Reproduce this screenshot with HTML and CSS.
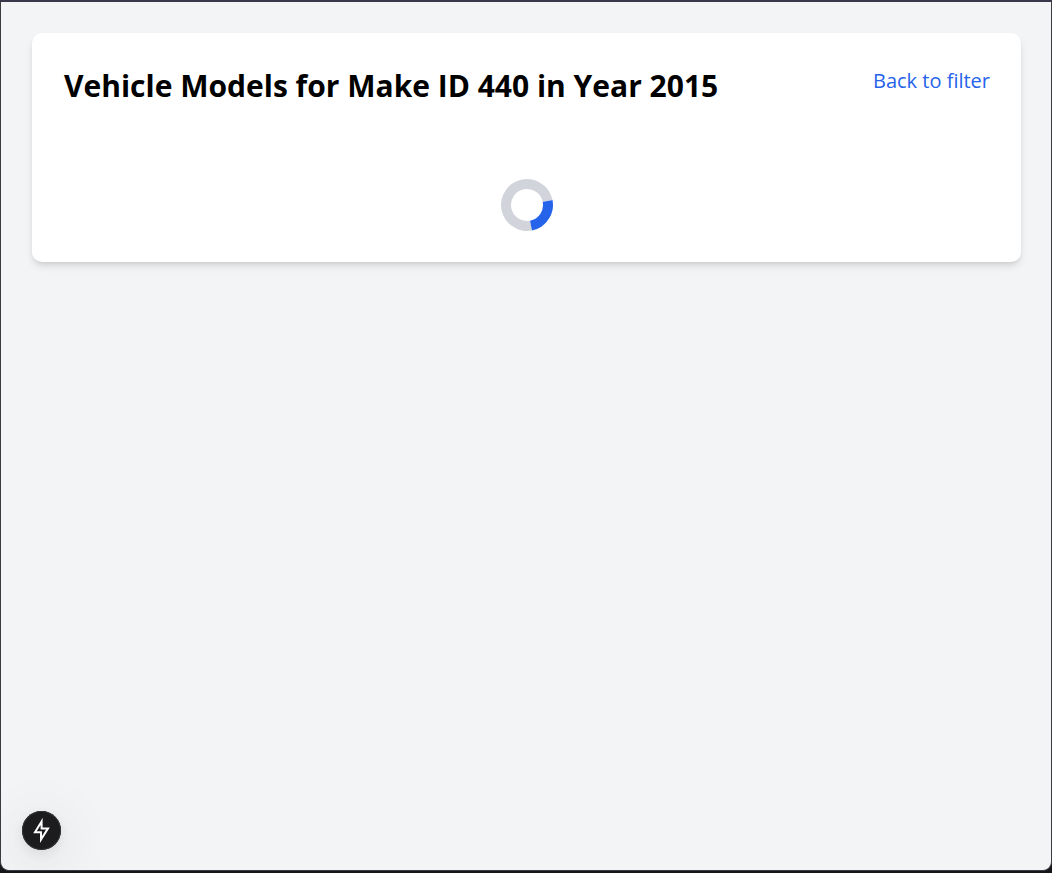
FILE: index.html
```html
<!DOCTYPE html>
<html lang="en">
<head>
<meta charset="utf-8">
<meta name="viewport" content="width=device-width, initial-scale=1">
<title>Vehicle Models</title>
<link rel="stylesheet" href="styles.css">
</head>
<body>
<div class="window">
  <main class="page">
    <section class="card">
      <header class="card-header">
        <h1 class="title">Vehicle Models for Make ID 440 in Year 2015</h1>
        <a class="back-link" href="#">Back to filter</a>
      </header>
      <div class="loading" role="status" aria-label="Loading">
        <div class="spinner"></div>
      </div>
    </section>
  </main>
  <button class="dev-button" type="button" aria-label="Route information">
    <svg class="bolt" viewBox="0 0 39 39" aria-hidden="true">
      <path d="M19.6 10.4 L13 21.3 H19 V28.6 L26 17.4 H19.6 Z" fill="none" stroke="#fff" stroke-width="2"/>
    </svg>
  </button>
</div>
</body>
</html>
```
FILE: styles.css
```css
* {
  box-sizing: border-box;
}

body {
  margin: 0;
  background: #16151a;
  font-family: "Segoe UI", "Open Sans", "Noto Sans", sans-serif;
}

.window {
  position: relative;
  display: flex;
  flex-direction: column;
  min-height: calc(100vh - 2px);
  border: 1px solid #3a3a40;
  border-top: 2px solid #3b374a;
  border-radius: 0 0 9px 9px;
  background: #f3f4f6;
  overflow: hidden;
}

.page {
  flex: 1;
  padding: 31px 30px 31px 31px;
}

.card {
  padding: 31px;
  border-radius: 10px;
  background: #fff;
  box-shadow: 0 5px 8px -1px rgba(0, 0, 0, 0.1), 0 3px 5px -2px rgba(0, 0, 0, 0.1);
}

.card-header {
  display: flex;
  justify-content: space-between;
  align-items: flex-start;
  gap: 20px;
  margin-bottom: 31px;
}

.title {
  margin: 0;
  padding-left: 1px;
  font-size: 30px;
  line-height: 44px;
  font-weight: 700;
  color: #000;
}

.back-link {
  font-size: 20px;
  line-height: 34px;
  color: #2563eb;
  text-decoration: none;
  white-space: nowrap;
}

.back-link:hover {
  text-decoration: underline;
}

.loading {
  display: flex;
  justify-content: center;
  padding-top: 40px;
}

.spinner {
  width: 52px;
  height: 52px;
  border: 10px solid #d1d5db;
  border-right-color: #2563eb;
  border-radius: 50%;
  transform: rotate(34deg);
}

.dev-button {
  position: absolute;
  bottom: 20px;
  left: 21px;
  width: 39px;
  height: 39px;
  padding: 0;
  border: 0;
  border-radius: 50%;
  background: #1c1c1e;
  box-shadow: inset 0 0 0 1px #343437, 0 12px 60px rgba(0, 0, 0, 0.14), 0 4px 12px rgba(0, 0, 0, 0.08);
}

.bolt {
  display: block;
  width: 39px;
  height: 39px;
}
```
